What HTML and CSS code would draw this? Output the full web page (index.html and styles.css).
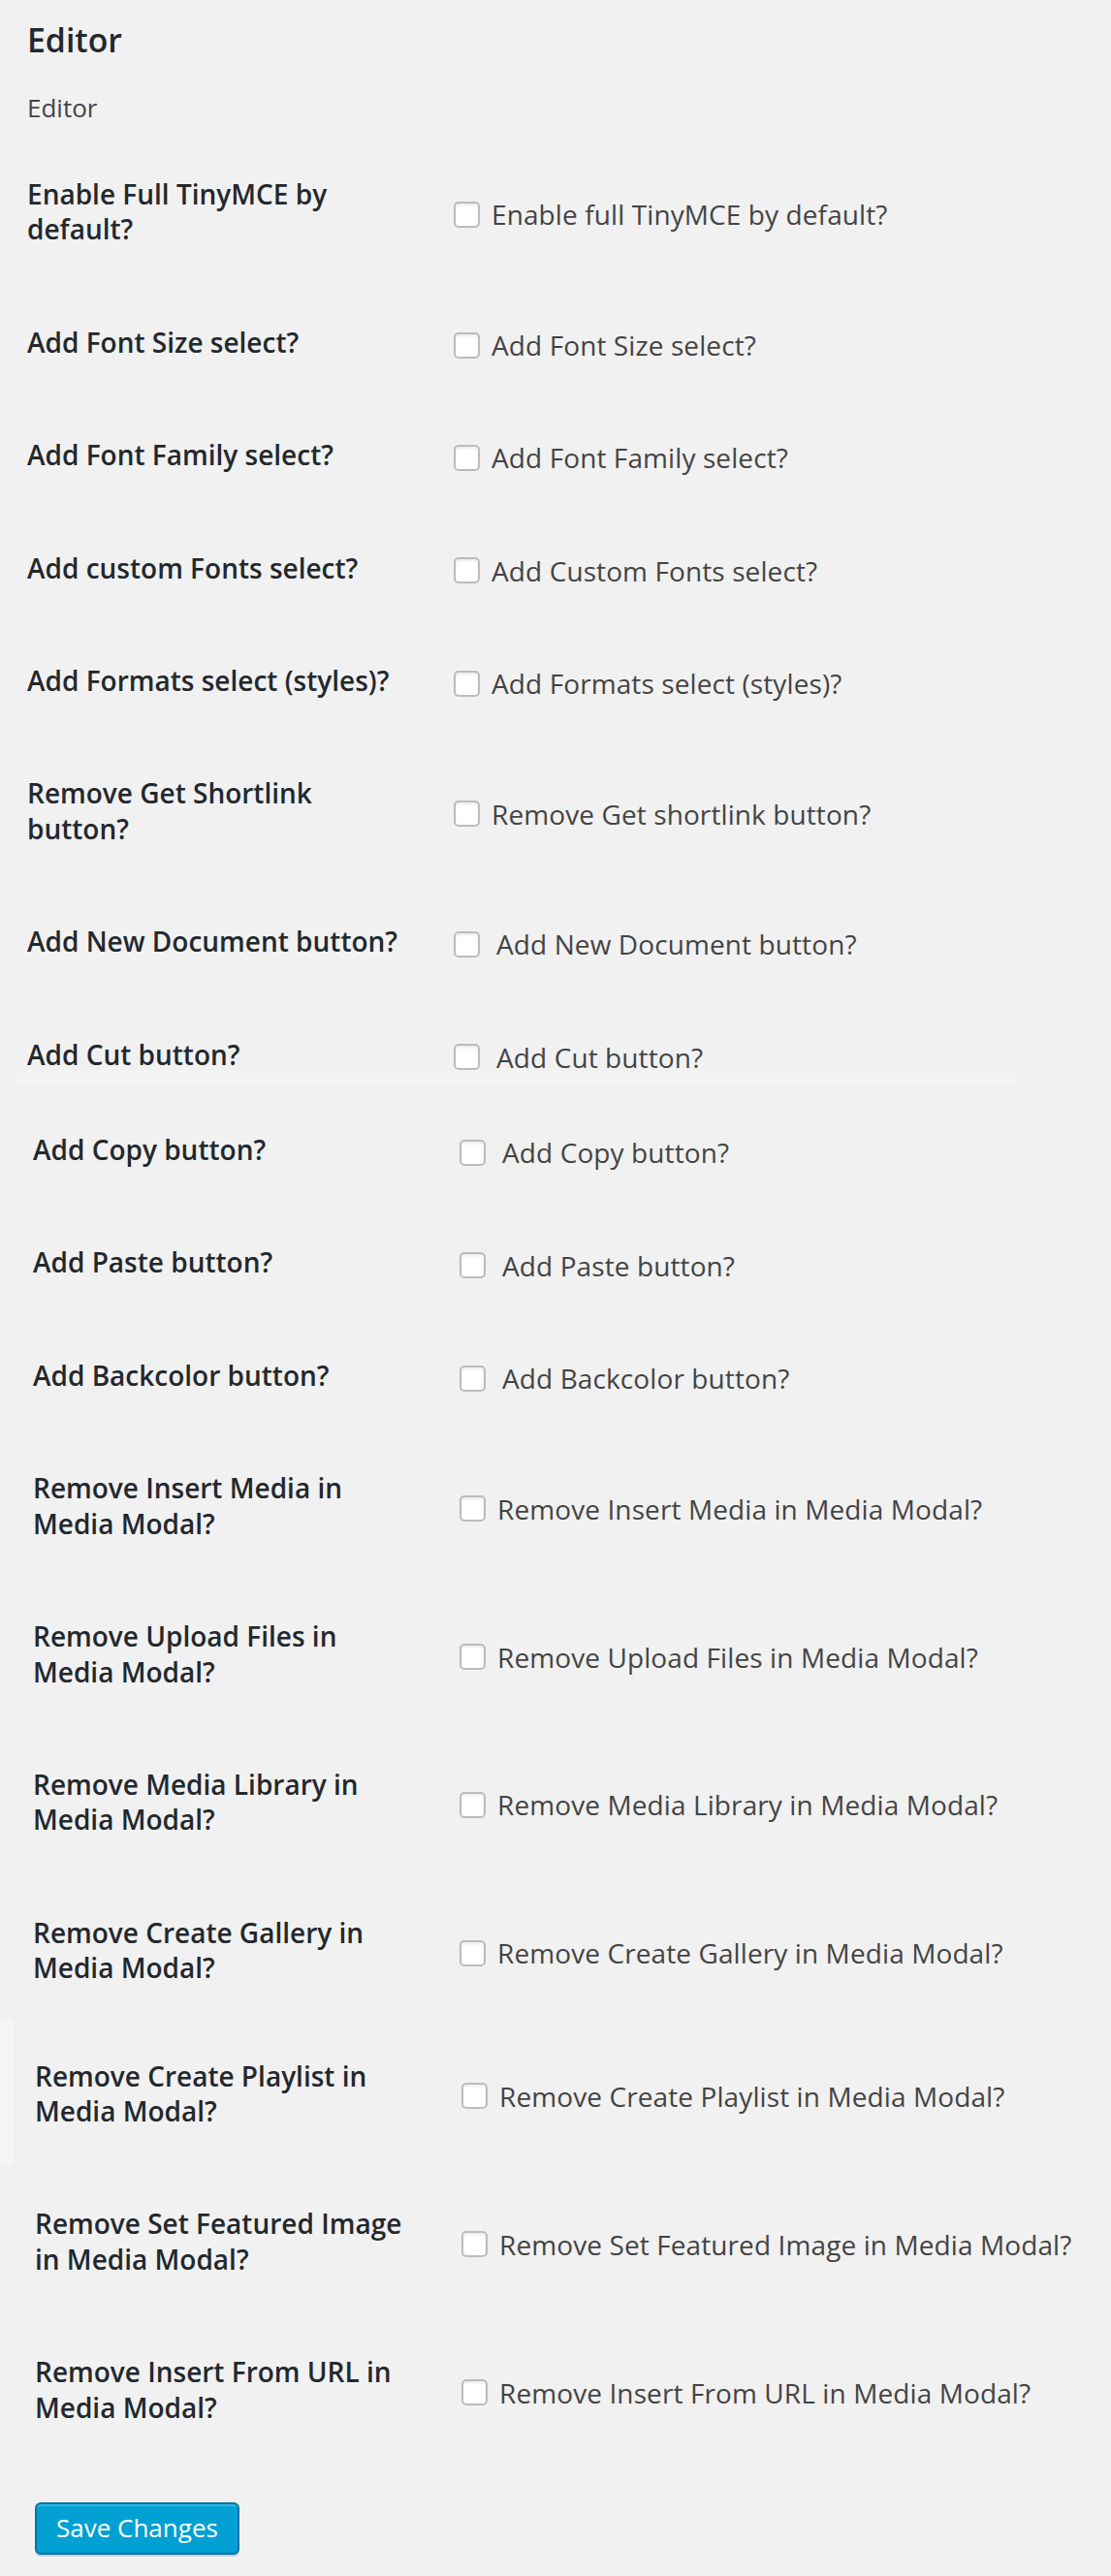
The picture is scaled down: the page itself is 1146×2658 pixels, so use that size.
FILE: index.html
```html
<!DOCTYPE html>
<html lang="en">
<head>
<meta charset="utf-8">
<title>Editor</title>
<link rel="stylesheet" href="styles.css">
</head>
<body>
<div class="wrap">
  <h2 class="title">Editor</h2>
  <p class="desc">Editor</p>

  <div class="sheet sheet-a">
    <div class="row"><div class="th">Enable Full TinyMCE by default?</div><div class="td"><label class="opt"><input type="checkbox" class="cb"><span>Enable full TinyMCE by default?</span></label></div></div>
    <div class="row"><div class="th">Add Font Size select?</div><div class="td"><label class="opt"><input type="checkbox" class="cb"><span>Add Font Size select?</span></label></div></div>
    <div class="row"><div class="th">Add Font Family select?</div><div class="td"><label class="opt"><input type="checkbox" class="cb"><span>Add Font Family select?</span></label></div></div>
    <div class="row"><div class="th">Add custom Fonts select?</div><div class="td"><label class="opt"><input type="checkbox" class="cb"><span>Add Custom Fonts select?</span></label></div></div>
    <div class="row"><div class="th">Add Formats select (styles)?</div><div class="td"><label class="opt"><input type="checkbox" class="cb"><span>Add Formats select (styles)?</span></label></div></div>
    <div class="row"><div class="th">Remove Get Shortlink button?</div><div class="td"><label class="opt"><input type="checkbox" class="cb"><span>Remove Get shortlink button?</span></label></div></div>
    <div class="row"><div class="th">Add New Document button?</div><div class="td"><label class="opt opt-wide"><input type="checkbox" class="cb"><span>Add New Document button?</span></label></div></div>
    <div class="row"><div class="th">Add Cut button?</div><div class="td"><label class="opt opt-wide"><input type="checkbox" class="cb"><span>Add Cut button?</span></label></div></div>
  </div>

  <div class="seam"></div>

  <div class="sheet sheet-b">
    <div class="row"><div class="th">Add Copy button?</div><div class="td"><label class="opt opt-wide"><input type="checkbox" class="cb"><span>Add Copy button?</span></label></div></div>
    <div class="row"><div class="th">Add Paste button?</div><div class="td"><label class="opt opt-wide"><input type="checkbox" class="cb"><span>Add Paste button?</span></label></div></div>
    <div class="row"><div class="th">Add Backcolor button?</div><div class="td"><label class="opt opt-wide"><input type="checkbox" class="cb"><span>Add Backcolor button?</span></label></div></div>
    <div class="row"><div class="th">Remove Insert Media in Media Modal?</div><div class="td"><label class="opt"><input type="checkbox" class="cb"><span>Remove Insert Media in Media Modal?</span></label></div></div>
    <div class="row"><div class="th">Remove Upload Files in Media Modal?</div><div class="td"><label class="opt"><input type="checkbox" class="cb"><span>Remove Upload Files in Media Modal?</span></label></div></div>
    <div class="row"><div class="th">Remove Media Library in Media Modal?</div><div class="td"><label class="opt"><input type="checkbox" class="cb"><span>Remove Media Library in Media Modal?</span></label></div></div>
    <div class="row"><div class="th">Remove Create Gallery in Media Modal?</div><div class="td"><label class="opt"><input type="checkbox" class="cb"><span>Remove Create Gallery in Media Modal?</span></label></div></div>
  </div>

  <div class="sheet sheet-c">
    <div class="row"><div class="th">Remove Create Playlist in Media Modal?</div><div class="td"><label class="opt"><input type="checkbox" class="cb"><span>Remove Create Playlist in Media Modal?</span></label></div></div>
    <div class="row"><div class="th">Remove Set Featured Image in Media Modal?</div><div class="td"><label class="opt"><input type="checkbox" class="cb"><span>Remove Set Featured Image in Media Modal?</span></label></div></div>
    <div class="row"><div class="th">Remove Insert From URL in Media Modal?</div><div class="td"><label class="opt"><input type="checkbox" class="cb"><span>Remove Insert From URL in Media Modal?</span></label></div></div>
  </div>

  <p class="submit"><button type="button" class="btn">Save Changes</button></p>
</div>
</body>
</html>
```

FILE: styles.css
```css
html, body {
  margin: 0;
  background: #f1f1f1;
}

body {
  font-family: "Open Sans", "Noto Sans", sans-serif;
  color: #444;
}

.wrap {
  padding-top: 17px;
  padding-bottom: 20px;
}

.title {
  margin: 0 0 0 28px;
  font-size: 33.8px;
  font-weight: 600;
  line-height: 48px;
  color: #23282d;
}

.desc {
  margin: 28px 0 0 28px;
  font-size: 26px;
  line-height: 36px;
  color: #444;
}

.sheet-a {
  margin-top: 13px;
  padding-left: 28px;
}

.seam {
  margin: -41px 0 0 15px;
  width: 1034px;
  height: 13px;
  background: #f4f4f4;
}

.sheet-b {
  padding-top: 10px;
  padding-left: 34px;
}

.sheet-c {
  margin-top: -5px;
  padding-left: 36px;
  background: linear-gradient(to right, #f5f5f5 14px, transparent 14px) no-repeat 0 0 / 14px 150px;
}

.row {
  display: flex;
}

.th {
  flex: none;
  width: 400px;
  padding: 40px 20px 40px 0;
  font-size: 28px;
  font-weight: 600;
  line-height: 36.4px;
  color: #23282d;
}

.td {
  display: flex;
  align-items: center;
  padding: 33px 20px 27px;
  font-size: 28px;
  line-height: 42px;
  letter-spacing: 0.1px;
  color: #444;
}

.opt {
  display: flex;
  align-items: center;
  gap: 12px;
}

.opt-wide {
  gap: 17px;
}

.cb {
  -webkit-appearance: none;
  appearance: none;
  flex: none;
  margin: 0;
  width: 27px;
  height: 27px;
  box-sizing: border-box;
  border: 2px solid #b9bdc1;
  border-radius: 5px;
  background: #fff;
  box-shadow: inset 0 2px 3px rgba(0, 0, 0, 0.08);
}

.submit {
  margin: 40px 0 0 36px;
  padding: 0;
}

.btn {
  box-sizing: border-box;
  height: 54px;
  padding: 0 20px 2px;
  border: 2px solid #0073aa;
  border-radius: 6px;
  background: #00a0d2;
  color: #fff;
  font-family: "Open Sans", "Noto Sans", sans-serif;
  font-size: 26px;
  line-height: 48px;
  box-shadow: inset 0 2px 0 rgba(120, 200, 230, 0.5), 0 2px 0 rgba(0, 0, 0, 0.15);
}
```
